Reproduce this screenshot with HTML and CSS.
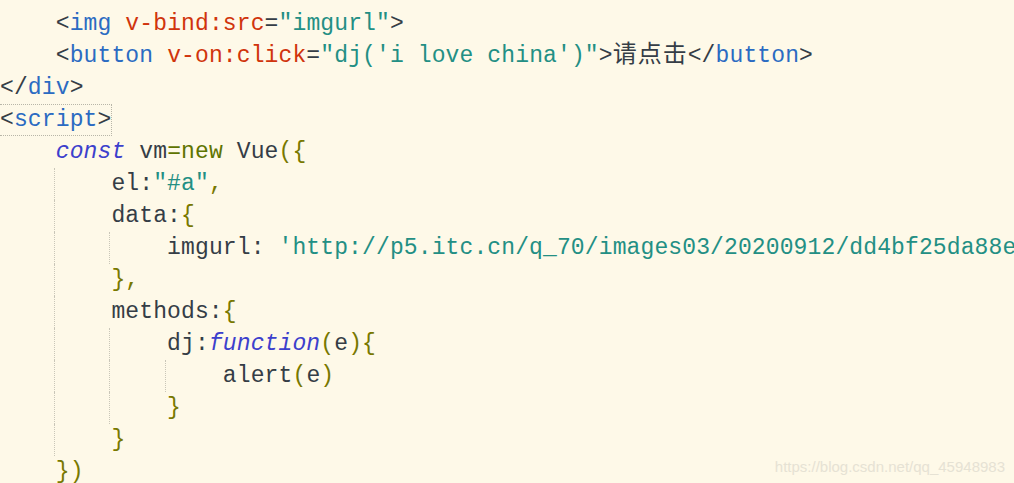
FILE: index.html
```html
<!DOCTYPE html>
<html>
<head>
<meta charset="utf-8">
<link rel="stylesheet" href="styles.css">
</head>
<body>
<div class="editor">
  <div class="line"><span class="ind"></span><span class="p">&lt;</span><span class="tag">img</span> <span class="attr">v-bind:src</span><span class="p">=</span><span class="str">"imgurl"</span><span class="p">&gt;</span></div>
  <div class="line"><span class="ind"></span><span class="p">&lt;</span><span class="tag">button</span> <span class="attr">v-on:click</span><span class="p">=</span><span class="str">"dj('i love china')"</span><span class="p">&gt;</span><span class="cjk">请点击</span><span class="p">&lt;/</span><span class="tag">button</span><span class="p">&gt;</span></div>
  <div class="line"><span class="p">&lt;/</span><span class="tag">div</span><span class="p">&gt;</span></div>
  <div class="line"><span class="match"><span class="p">&lt;</span><span class="tag">script</span><span class="p">&gt;</span></span></div>
  <div class="line"><span class="ind"></span><span class="kw">const</span> <span class="p">vm</span><span class="op">=new</span> <span class="p">Vue</span><span class="br">({</span></div>
  <div class="line"><span class="ind"></span><span class="ind g"></span><span class="p">el:</span><span class="str">"#a"</span><span class="br">,</span></div>
  <div class="line"><span class="ind"></span><span class="ind g"></span><span class="p">data:</span><span class="br">{</span></div>
  <div class="line"><span class="ind"></span><span class="ind g"></span><span class="ind g"></span><span class="p">imgurl: </span><span class="str">'http://p5.itc.cn/q_70/images03/20200912/dd4bf25da88e</span></div>
  <div class="line"><span class="ind"></span><span class="ind g"></span><span class="br">},</span></div>
  <div class="line"><span class="ind"></span><span class="ind g"></span><span class="p">methods:</span><span class="br">{</span></div>
  <div class="line"><span class="ind"></span><span class="ind g"></span><span class="ind g"></span><span class="p">dj:</span><span class="kw">function</span><span class="br">(</span><span class="p">e</span><span class="br">){</span></div>
  <div class="line"><span class="ind"></span><span class="ind g"></span><span class="ind g"></span><span class="ind g"></span><span class="p">alert</span><span class="br">(</span><span class="p">e</span><span class="br">)</span></div>
  <div class="line"><span class="ind"></span><span class="ind g"></span><span class="ind g"></span><span class="br">}</span></div>
  <div class="line"><span class="ind"></span><span class="ind g"></span><span class="br">}</span></div>
  <div class="line"><span class="ind"></span><span class="br">})</span></div>
  <div class="watermark">https://blog.csdn.net/qq_45948983</div>
</div>
</body>
</html>
```
FILE: styles.css
```css
html, body {
  margin: 0;
  padding: 0;
  background: #fef9e8;
  overflow: hidden;
}
.editor {
  position: relative;
  width: 1014px;
  height: 483px;
  padding: 8px 0 0 0;
  box-sizing: border-box;
  font-family: "Liberation Mono", monospace;
  font-size: 23px;
  letter-spacing: 0.12px;
  color: #3b434c;
  overflow: hidden;
}
.line {
  height: 32px;
  line-height: 32px;
  white-space: pre;
}
.ind {
  display: inline-block;
  width: 4ch;
  height: 32px;
  vertical-align: top;
  box-sizing: border-box;
  margin-right: 0.5px;
}
.ind.g {
  border-left: 1px dotted #c9c6b8;
  margin-left: -2px;
  margin-right: 2.5px;
}
.p { color: #353d46; }
.tag { color: #2b6bc2; }
.attr { color: #d0340c; }
.str { color: #238f84; }
.kw { color: #3c40cc; font-style: italic; }
.op { color: #5e7400; }
.br { color: #787800; }
.cjk {
  font-family: "Noto Sans CJK SC", sans-serif;
  font-size: 24px;
  line-height: 1;
  color: #353d46;
  letter-spacing: 1px;
}
.match {
  display: inline-block;
  height: 30px;
  line-height: 30px;
  vertical-align: top;
  border: 1px dotted #b8b6a8;
  border-left: none;
}
.watermark {
  position: absolute;
  right: 9px;
  bottom: 8px;
  font-family: "Liberation Sans", sans-serif;
  font-size: 15px;
  letter-spacing: 0;
  color: #e6e2d4;
}
```
